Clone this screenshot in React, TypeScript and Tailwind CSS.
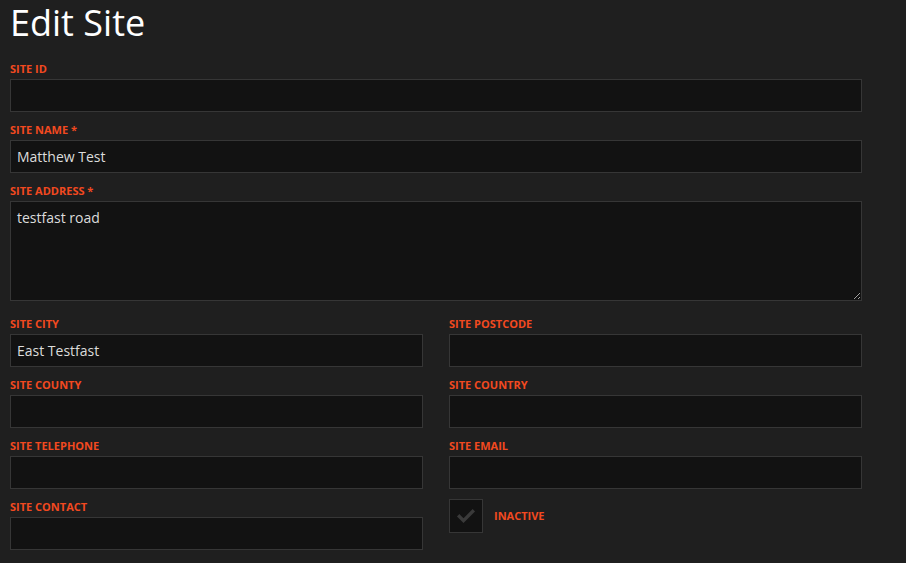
import React from "react";

const labelCls =
  "block h-4 leading-4 text-[11px] font-bold uppercase text-[#f2491f] mb-[2px]";
const inputCls =
  "block w-full h-[33px] bg-[#121212] border border-[#363636] px-[6px] text-[14px] text-[#dcdcdc] outline-none";

type FieldProps = {
  label: string;
  value?: string;
  required?: boolean;
};

const Field = ({ label, value = "", required }: FieldProps) => (
  <div className="mb-[10px]">
    <label className={labelCls}>
      {label}
      {required && " *"}
    </label>
    <input type="text" defaultValue={value} className={inputCls} />
  </div>
);

export default function App() {
  return (
    <div
      className="w-[906px] h-[563px] overflow-hidden bg-[#1f1f1f] text-white"
      style={{ fontFamily: '"Open Sans", sans-serif' }}
    >
      <div className="w-[852px] ml-[10px]">
        <h1 className="text-[36px] leading-[46px] font-normal text-white pb-[15px]">
          Edit Site
        </h1>

        <Field label="Site ID" />
        <Field label="Site Name" value="Matthew Test" required />

        <div className="mb-[15px]">
          <label className={labelCls}>Site Address *</label>
          <textarea
            defaultValue="testfast road"
            className="block w-full h-[100px] bg-[#121212] border border-[#363636] px-[6px] py-[5px] text-[14px] text-[#dcdcdc] outline-none"
          />
        </div>

        <div className="grid grid-cols-2 gap-x-[26px]">
          <Field label="Site City" value="East Testfast" />
          <Field label="Site Postcode" />
          <Field label="Site County" />
          <Field label="Site Country" />
          <Field label="Site Telephone" />
          <Field label="Site Email" />
          <Field label="Site Contact" />
          <div className="self-start flex items-center h-[34px] gap-[11px]">
            <div className="w-[34px] h-[34px] bg-[#121212] border border-[#363636] flex items-center justify-center">
              <svg width="20" height="20" viewBox="0 0 24 24" fill="none">
                <path
                  d="M4 12.5l5 5L20 6.5"
                  stroke="#3a3a3a"
                  strokeWidth="4"
                  strokeLinecap="square"
                />
              </svg>
            </div>
            <span className="text-[11px] font-bold uppercase text-[#f2491f]">
              Inactive
            </span>
          </div>
        </div>
      </div>
    </div>
  );
}
